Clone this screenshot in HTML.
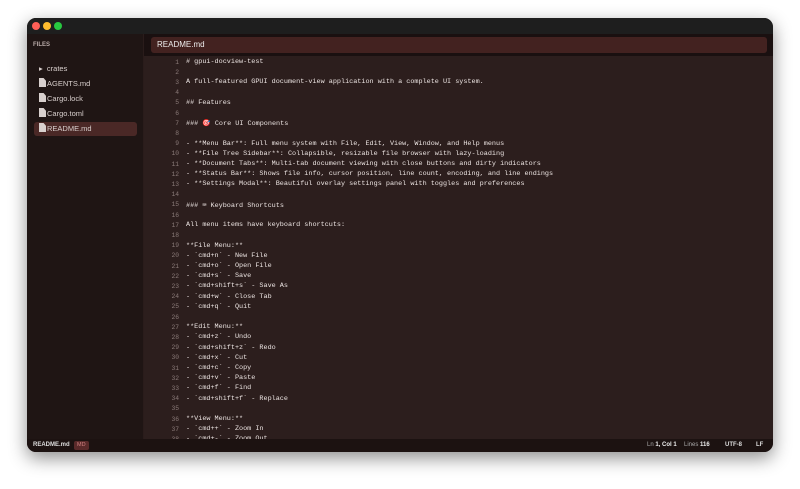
<!DOCTYPE html>
<html><head><meta charset="utf-8"><style>
*{margin:0;padding:0;box-sizing:border-box}
body{width:800px;height:489px;background:#fff;position:relative;overflow:hidden;font-family:"Liberation Sans",sans-serif}
.win{position:absolute;left:27px;top:18px;width:746px;height:434px;border-radius:9px;overflow:hidden;background:#2c1e1d;box-shadow:0 6px 18px rgba(0,0,0,.45)}
.title{position:absolute;left:0;top:0;right:0;height:16px;background:#1e1e1e}
.dot{position:absolute;top:4px;width:8px;height:8px;border-radius:50%}
.side{position:absolute;left:0;top:16px;width:117px;bottom:13px;background:#1f1514;border-right:1px solid #2a1c1b}
.files{position:absolute;left:6px;top:8px;font-size:6px;color:#b8aaa8;font-weight:bold}
.it{position:absolute;left:12px;font-size:7.5px;color:#d8cfcd;height:14px;line-height:14px}
.ic{display:inline-block;width:7px;height:9px;background:#d8d0ce;vertical-align:-1px;margin-right:1px;clip-path:polygon(0 0,65% 0,100% 30%,100% 100%,0 100%)}
.sel{position:absolute;left:7px;top:88px;width:103px;height:14px;background:#4a2826;border-radius:3px}
.tabbar{position:absolute;left:117px;top:16px;right:0;height:22px;background:#1a1010}
.tab{position:absolute;left:7px;top:3px;right:6px;height:16px;background:#432220;border-radius:3px;color:#eee;font-size:8px;line-height:16px;padding-left:6px}
.ed{position:absolute;left:117px;top:39px;right:0;bottom:13px;overflow:hidden}
.ln{position:absolute;left:0;width:35px;text-align:right;font-family:"Liberation Mono",monospace;font-size:6.3px;color:#8a7a78}
.tx{position:absolute;left:42px;font-family:"Liberation Mono",monospace;font-size:6.8px;color:#ece4e2;white-space:pre}
.status{position:absolute;left:0;right:0;bottom:0;height:13px;background:#1c1211;font-size:6px;color:#ddd;line-height:13px}
</style></head><body>
<div class="win">
<div class="title"><div class="dot" style="left:5px;background:#fe5f57"></div><div class="dot" style="left:16px;background:#febc2e"></div><div class="dot" style="left:27px;background:#28c840"></div></div>
<div class="side">
<div class="files">FILES</div>
<div class="sel"></div>
<div class="it" style="top:28px">▸ &nbsp;crates</div>
<div class="it" style="top:43px"><span class="ic"></span>AGENTS.md</div>
<div class="it" style="top:58px"><span class="ic"></span>Cargo.lock</div>
<div class="it" style="top:73px"><span class="ic"></span>Cargo.toml</div>
<div class="it" style="top:88px"><span class="ic"></span>README.md</div>
</div>
<div class="tabbar"><div class="tab">README.md</div></div>
<div class="ed" id="ed"></div>
<div class="status"><span style="position:absolute;left:6px;font-weight:bold">README.md</span><span style="position:absolute;left:47px;top:2px;height:9px;line-height:9px;padding:0 3px;background:#5a2a2a;color:#d08080;border-radius:2px;font-size:5.5px">MD</span>
<span style="position:absolute;left:620px;color:#aaa">Ln <b style="color:#eee">1, Col 1</b></span>
<span style="position:absolute;left:657px;color:#aaa">Lines <b style="color:#eee">116</b></span>
<span style="position:absolute;left:698px;font-weight:bold">UTF-8</span>
<span style="position:absolute;left:729px;font-weight:bold">LF</span></div>
</div>
<script>
var L=["# gpui-docview-test","","A full-featured GPUI document-view application with a complete UI system.","","## Features","","### 🎯 Core UI Components","","- **Menu Bar**: Full menu system with File, Edit, View, Window, and Help menus","- **File Tree Sidebar**: Collapsible, resizable file browser with lazy-loading","- **Document Tabs**: Multi-tab document viewing with close buttons and dirty indicators","- **Status Bar**: Shows file info, cursor position, line count, encoding, and line endings","- **Settings Modal**: Beautiful overlay settings panel with toggles and preferences","","### ⌨ Keyboard Shortcuts","","All menu items have keyboard shortcuts:","","**File Menu:**","- `cmd+n` - New File","- `cmd+o` - Open File","- `cmd+s` - Save","- `cmd+shift+s` - Save As","- `cmd+w` - Close Tab","- `cmd+q` - Quit","","**Edit Menu:**","- `cmd+z` - Undo","- `cmd+shift+z` - Redo","- `cmd+x` - Cut","- `cmd+c` - Copy","- `cmd+v` - Paste","- `cmd+f` - Find","- `cmd+shift+f` - Replace","","**View Menu:**","- `cmd++` - Zoom In","- `cmd+-` - Zoom Out"];
var h="";for(var i=0;i<L.length;i++){var t=1+i*10.2;h+='<div class="ln" style="top:'+(t+0.5)+'px">'+(i+1)+'</div><div class="tx" style="top:'+t+'px">'+L[i].replace(/&/g,"&amp;").replace(/</g,"&lt;")+'</div>';}
document.getElementById("ed").innerHTML=h;
</script>
</body></html>
